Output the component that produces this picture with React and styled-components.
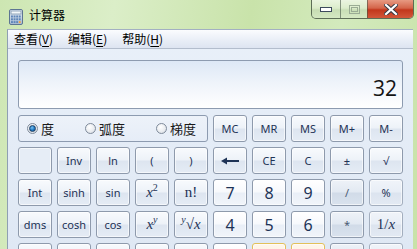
import React from "react";
import styled, { createGlobalStyle, css } from "styled-components";

const GlobalStyle = createGlobalStyle`
  html, body { margin: 0; padding: 0; }
  body { overflow: hidden; font-family: "Noto Sans", "Open Sans", sans-serif; }
`;

const Frame = styled.div`
  width: 417px;
  height: 249px;
  overflow: hidden;
  display: flex;
  flex-direction: column;
  background: linear-gradient(100deg, #cde6b2 0%, #dbeec8 25%, #c9e3aa 55%, #d3eabd 75%, #c8e2a8 100%);
`;

const TitleBar = styled.div`
  height: 29px;
  flex: none;
  display: flex;
  align-items: flex-start;
`;

const AppIcon = styled.div`
  margin: 8px 0 0 8px;
  width: 16px;
  height: 16px;
`;

const Title = styled.div`
  margin: 7px 0 0 5px;
  font-family: "Noto Sans CJK SC", sans-serif;
  font-size: 12px;
  line-height: 16px;
  color: #000;
`;

const CaptionGroup = styled.div`
  margin-left: auto;
  margin-right: 3px;
  display: flex;
  height: 19px;
  border: 1px solid rgba(55, 70, 55, 0.75);
  border-top: none;
  border-radius: 0 0 5px 5px;
  overflow: hidden;
  box-sizing: border-box;
`;

const CapBtn = styled.div`
  width: ${(p) => p.$w}px;
  height: 100%;
  display: flex;
  align-items: center;
  justify-content: center;
  box-sizing: border-box;
  & + & { border-left: 1px solid rgba(70, 85, 70, 0.6); }
  ${(p) =>
    p.$close
      ? css`
          background: linear-gradient(180deg, #e79a82 0%, #d4654a 45%, #c2371c 55%, #d2573a 100%);
        `
      : css`
          background: linear-gradient(180deg, rgba(255,255,255,0.55) 0%, rgba(230,240,220,0.5) 45%, rgba(190,210,175,0.5) 55%, rgba(215,232,200,0.6) 100%);
        `}
`;

const Body = styled.div`
  flex: 1;
  display: flex;
  padding: 0 4px 0 7px;
  min-height: 0;
`;

const Client = styled.div`
  flex: 1;
  display: flex;
  flex-direction: column;
  background: linear-gradient(180deg, #e9f0f9 0%, #dfe8f4 100%);
  border-top: 1px solid #a3b0c2;
  border-left: 1px solid #8f9fb3;
`;

const MenuBar = styled.div`
  height: 18px;
  flex: none;
  display: flex;
  align-items: center;
  padding-left: 6px;
  background: linear-gradient(180deg, #fbfcfe 0%, #eef2f9 40%, #dde4f1 100%);
  border-bottom: 1px solid #b3bdcd;
`;

const MenuItem = styled.span`
  font-family: "Noto Sans CJK SC", sans-serif;
  font-size: 12px;
  line-height: 18px;
  color: #000;
  margin-right: 15px;
  u { text-decoration-thickness: 1px; text-underline-offset: 2px; }
`;

const Panel = styled.div`
  padding: 11px 10px 0 10px;
`;

const Display = styled.div`
  height: 49px;
  box-sizing: border-box;
  border: 1px solid #8d9bb0;
  border-radius: 3px;
  background: linear-gradient(180deg, #dde8f6 0%, #eef3fa 45%, #ffffff 100%);
  display: flex;
  align-items: flex-end;
  justify-content: flex-end;
  padding: 0 5px 8px 0;
  margin-bottom: 6px;
  font-family: "Open Sans", "Noto Sans", sans-serif;
  font-size: 21px;
  line-height: 24px;
  color: #141414;
`;

const Keys = styled.div`
  display: grid;
  grid-template-columns: repeat(10, 34px);
  grid-auto-rows: 27px;
  gap: 5px;
`;

const RadioGroup = styled.div`
  grid-column: span 5;
  box-sizing: border-box;
  border: 1px solid #8d9bb0;
  border-radius: 3px;
  background: linear-gradient(180deg, #edf2f9, #e6edf7);
  display: flex;
  align-items: center;
  justify-content: space-between;
  padding: 0 11px 0 8px;
`;

const RadioItem = styled.label`
  display: flex;
  align-items: center;
  gap: 3px;
  font-family: "Noto Sans CJK SC", sans-serif;
  font-size: 13px;
  color: #1a1a1a;
`;

const RadioCircle = styled.span`
  width: 11px;
  height: 11px;
  box-sizing: border-box;
  border-radius: 50%;
  border: 1px solid #7f8b9b;
  background: radial-gradient(circle at 40% 35%, #ffffff 0%, #e8ebef 60%, #c9ced6 100%);
  display: flex;
  align-items: center;
  justify-content: center;
  &::after {
    content: "";
    display: ${(p) => (p.$on ? "block" : "none")};
    width: 7px;
    height: 7px;
    border-radius: 50%;
    box-sizing: border-box;
    border: 1px solid #1d3f63;
    background: radial-gradient(circle at 40% 35%, #7cc4f2 0%, #1e78c2 55%, #0d4a86 100%);
  }
`;

const variants = {
  fn: css`
    background: linear-gradient(180deg, #f8fafd 0%, #edf2f8 48%, #dde5f0 52%, #e5ecf5 100%);
    border-color: #8e9aac;
  `,
  num: css`
    background: linear-gradient(180deg, #ffffff 0%, #f7f9fc 48%, #e9eff7 52%, #f1f5fa 100%);
    border-color: #8e9aac;
  `,
  op: css`
    background: linear-gradient(180deg, #eef2f8 0%, #e2e9f2 48%, #d1dbe8 52%, #d9e2ed 100%);
    border-color: #8e9aac;
    color: #4a5a72;
  `,
  pale: css`
    background: linear-gradient(180deg, #f0f4f9 0%, #e8eef6 48%, #dce4ef 52%, #e3eaf3 100%);
    border-color: #a3aebe;
  `,
  blank: css`
    background: #e6edf6;
    border-color: #8e9aac;
  `,
  hot: css`
    background: linear-gradient(180deg, #fff6ea 0%, #fdeedc 100%);
    border-color: #e3c15a;
  `,
};

const Key = styled.button`
  box-sizing: border-box;
  padding: 0;
  margin: 0;
  border: 1px solid;
  border-radius: 3px;
  box-shadow: inset 0 0 0 1px rgba(255, 255, 255, 0.6);
  font-family: "Noto Sans", "Open Sans", sans-serif;
  font-size: ${(p) => (p.$big ? "16px" : "11px")};
  color: #1e3356;
  display: flex;
  align-items: center;
  justify-content: center;
  line-height: 1;
  ${(p) => variants[p.$v || "fn"]}
`;

const MathLbl = styled.span`
  font-family: "Liberation Serif", "DejaVu Serif", serif;
  font-size: 15px;
  color: #1e3356;
  i { font-style: italic; }
  sup { font-size: 10px; vertical-align: 6px; line-height: 0; }
`;

const CalcIcon = () => (
  <svg width="16" height="16" viewBox="0 0 16 16">
    <defs>
      <linearGradient id="cb" x1="0" y1="0" x2="0" y2="1">
        <stop offset="0" stopColor="#e3ecf6" />
        <stop offset="1" stopColor="#a9bdd4" />
      </linearGradient>
    </defs>
    <rect x="1.5" y="0.5" width="13" height="15" rx="1.5" fill="url(#cb)" stroke="#5d7592" />
    <rect x="3" y="2" width="10" height="3" fill="#f4f8fb" stroke="#7d93ad" strokeWidth="0.8" />
    {[0, 1, 2, 3].map((c) =>
      [0, 1, 2].map((r) => (
        <rect
          key={`${c}-${r}`}
          x={3 + c * 2.6}
          y={6.5 + r * 2.8}
          width="1.9"
          height="2"
          fill={c === 3 && r === 2 ? "#f0a040" : "#5f86b8"}
        />
      ))
    )}
  </svg>
);

const MinGlyph = () => (
  <svg width="12" height="5" viewBox="0 0 12 5">
    <rect x="0.5" y="0.5" width="11" height="4" fill="#fff" stroke="#3d4a5c" />
  </svg>
);

const MaxGlyph = () => (
  <svg width="11" height="9" viewBox="0 0 11 9">
    <rect x="0.5" y="0.5" width="10" height="8" fill="none" stroke="#9aac94" />
    <rect x="2.5" y="2.5" width="6" height="4" fill="none" stroke="#9aac94" />
  </svg>
);

const CloseGlyph = () => (
  <svg width="14" height="11" viewBox="0 0 14 11">
    <path d="M2 1 L12 10 M12 1 L2 10" stroke="#3b3b45" strokeWidth="4.2" strokeLinecap="square" />
    <path d="M2 1 L12 10 M12 1 L2 10" stroke="#ffffff" strokeWidth="2.2" strokeLinecap="square" />
  </svg>
);

const BackArrow = () => (
  <svg width="18" height="8" viewBox="0 0 18 8">
    <path d="M0 4 L6 0.5 L6 7.5 Z" fill="#1e3356" />
    <rect x="5" y="3" width="13" height="2" fill="#1e3356" />
  </svg>
);

const m = (node) => <MathLbl>{node}</MathLbl>;

const rows = [
  [
    { l: "", v: "blank" },
    { l: "Inv" },
    { l: "ln" },
    { l: "(" },
    { l: ")" },
    { l: <BackArrow /> },
    { l: "CE" },
    { l: "C" },
    { l: "±" },
    { l: "√" },
  ],
  [
    { l: "Int" },
    { l: "sinh" },
    { l: "sin" },
    { l: m(<><i>x</i><sup>2</sup></>) },
    { l: m("n!") },
    { l: "7", v: "num", big: true },
    { l: "8", v: "num", big: true },
    { l: "9", v: "num", big: true },
    { l: "/", v: "op" },
    { l: "%", v: "pale" },
  ],
  [
    { l: "dms" },
    { l: "cosh" },
    { l: "cos" },
    { l: m(<><i>x</i><sup><i>y</i></sup></>) },
    { l: m(<><sup><i>y</i></sup>√<i>x</i></>) },
    { l: "4", v: "num", big: true },
    { l: "5", v: "num", big: true },
    { l: "6", v: "num", big: true },
    { l: "*", v: "op" },
    { l: m(<>1/<i>x</i></>), v: "pale" },
  ],
  [
    { l: "" },
    { l: "" },
    { l: "" },
    { l: "" },
    { l: "" },
    { l: "", v: "num" },
    { l: "", v: "hot" },
    { l: "", v: "hot" },
    { l: "", v: "op" },
    { l: "", v: "pale" },
  ],
];

export default function App() {
  return (
    <>
      <GlobalStyle />
      <Frame>
        <TitleBar>
          <AppIcon>
            <CalcIcon />
          </AppIcon>
          <Title>计算器</Title>
          <CaptionGroup>
            <CapBtn $w={28}>
              <MinGlyph />
            </CapBtn>
            <CapBtn $w={27}>
              <MaxGlyph />
            </CapBtn>
            <CapBtn $w={46} $close>
              <CloseGlyph />
            </CapBtn>
          </CaptionGroup>
        </TitleBar>
        <Body>
          <Client>
            <MenuBar>
              <MenuItem>
                查看(<u>V</u>)
              </MenuItem>
              <MenuItem>
                编辑(<u>E</u>)
              </MenuItem>
              <MenuItem>
                帮助(<u>H</u>)
              </MenuItem>
            </MenuBar>
            <Panel>
              <Display>32</Display>
              <Keys>
                <RadioGroup>
                  <RadioItem>
                    <RadioCircle $on />度
                  </RadioItem>
                  <RadioItem>
                    <RadioCircle />弧度
                  </RadioItem>
                  <RadioItem>
                    <RadioCircle />梯度
                  </RadioItem>
                </RadioGroup>
                {["MC", "MR", "MS", "M+", "M-"].map((k) => (
                  <Key key={k}>{k}</Key>
                ))}
                {rows.flat().map((k, i) => (
                  <Key key={i} $v={k.v} $big={k.big}>
                    {k.l}
                  </Key>
                ))}
              </Keys>
            </Panel>
          </Client>
        </Body>
      </Frame>
    </>
  );
}
